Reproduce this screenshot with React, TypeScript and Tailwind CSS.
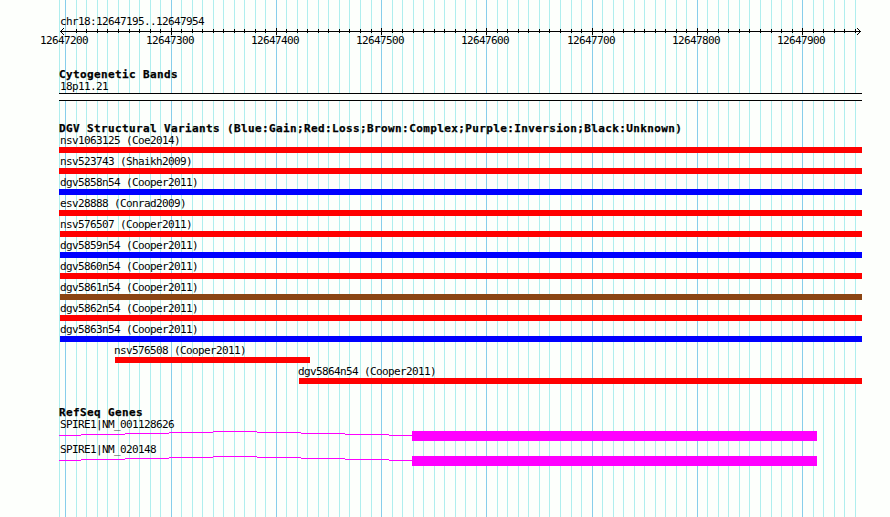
const GRID = [
  59, 65, 76, 86, 97, 107, 118, 129, 139, 150, 160, 171, 181, 192, 202, 213,
  223, 234, 244, 255, 265, 276, 286, 297, 307, 318, 328, 339, 349, 360, 371,
  381, 392, 402, 413, 423, 434, 444, 455, 465, 476, 486, 497, 507, 518, 528,
  539, 549, 560, 571, 581, 592, 602, 613, 623, 634, 644, 655, 665, 676, 686,
  697, 707, 718, 728, 739, 749, 760, 771, 781, 792, 802, 813, 823, 834, 844,
  855,
];

const MAJOR = [65, 171, 276, 381, 486, 592, 697, 802];

const LABELS = [
  "12647200",
  "12647300",
  "12647400",
  "12647500",
  "12647600",
  "12647700",
  "12647800",
  "12647900",
];

const VARIANTS = [
  { name: "nsv1063125 (Coe2014)", color: "bg-[#ff0000]", label: 60, start: 59, end: 862 },
  { name: "nsv523743 (Shaikh2009)", color: "bg-[#ff0000]", label: 60, start: 59, end: 862 },
  { name: "dgv5858n54 (Cooper2011)", color: "bg-[#0000ff]", label: 60, start: 59, end: 862 },
  { name: "esv28888 (Conrad2009)", color: "bg-[#ff0000]", label: 60, start: 59, end: 862 },
  { name: "nsv576507 (Cooper2011)", color: "bg-[#ff0000]", label: 60, start: 60, end: 862 },
  { name: "dgv5859n54 (Cooper2011)", color: "bg-[#0000ff]", label: 60, start: 60, end: 862 },
  { name: "dgv5860n54 (Cooper2011)", color: "bg-[#ff0000]", label: 60, start: 60, end: 862 },
  { name: "dgv5861n54 (Cooper2011)", color: "bg-[#8b4513]", label: 60, start: 60, end: 862 },
  { name: "dgv5862n54 (Cooper2011)", color: "bg-[#ff0000]", label: 60, start: 60, end: 862 },
  { name: "dgv5863n54 (Cooper2011)", color: "bg-[#0000ff]", label: 60, start: 60, end: 862 },
  { name: "nsv576508 (Cooper2011)", color: "bg-[#ff0000]", label: 114, start: 115, end: 310 },
  { name: "dgv5864n54 (Cooper2011)", color: "bg-[#ff0000]", label: 298, start: 299, end: 862 },
];

const GENES = ["SPIRE1|NM_001128626", "SPIRE1|NM_020148"];

const SMALL =
  "block whitespace-pre text-[11px] leading-[12px] tracking-[-0.62px]";
const HEADING =
  "block whitespace-pre pt-px pl-[59px] text-[11px] leading-[12px] font-bold tracking-[0.38px] [-webkit-text-stroke:0.25px_black]";

function GridLines() {
  return (
    <svg
      className="absolute inset-0"
      width="890"
      height="517"
      shapeRendering="crispEdges"
    >
      {GRID.map((x) => (
        <rect
          key={x}
          x={x}
          y="0"
          width="1"
          height="517"
          fill={MAJOR.includes(x) ? "#87ceeb" : "#afeeee"}
        />
      ))}
    </svg>
  );
}

function Ruler() {
  return (
    <svg
      className="block"
      width="890"
      height="7"
      shapeRendering="crispEdges"
      fill="#000"
    >
      <rect x="60" y="3" width="801" height="1" />
      {GRID.slice(2).map((x) =>
        MAJOR.includes(x) ? (
          <rect key={x} x={x} y="0" width="1" height="7" />
        ) : (
          <rect key={x} x={x} y="1" width="1" height="4" />
        )
      )}
      {[1, 2, 3].map((n) => (
        <g key={n}>
          <rect x={60 + n} y={3 - n} width="1" height="1" />
          <rect x={60 + n} y={3 + n} width="1" height="1" />
          <rect x={860 - n} y={3 - n} width="1" height="1" />
          <rect x={860 - n} y={3 + n} width="1" height="1" />
        </g>
      ))}
    </svg>
  );
}

function Variant({ name, color, label, start, end }: (typeof VARIANTS)[number]) {
  return (
    <div className="h-[21px]">
      <span className={SMALL} style={{ paddingLeft: label }}>
        {name}
      </span>
      <div
        className={`h-[6px] ${color}`}
        style={{ marginLeft: start, width: end - start }}
      />
    </div>
  );
}

function Gene({ name }: { name: string }) {
  return (
    <div className="h-[25px]">
      <span className={`${SMALL} pl-[60px]`}>{name}</span>
      <svg
        className="block"
        width="890"
        height="10"
        shapeRendering="crispEdges"
        fill="#ff00ff"
      >
        <rect x="59" y="4" width="22" height="1" />
        <rect x="81" y="3" width="44" height="1" />
        <rect x="125" y="2" width="44" height="1" />
        <rect x="169" y="1" width="44" height="1" />
        <rect x="213" y="0" width="44" height="1" />
        <rect x="257" y="1" width="44" height="1" />
        <rect x="301" y="2" width="44" height="1" />
        <rect x="345" y="3" width="44" height="1" />
        <rect x="389" y="4" width="23" height="1" />
        <rect x="412" y="0" width="405" height="10" />
      </svg>
    </div>
  );
}

export default function App() {
  return (
    <div className="relative h-[517px] w-[890px] overflow-hidden bg-[#fdfffc] font-['DejaVu_Sans_Mono',monospace] text-black">
      <GridLines />
      <main className="relative flex flex-col">
        <header className="h-[68px] pt-[16px]">
          <span className={`${SMALL} pl-[60px]`}>chr18:12647195..12647954</span>
          <Ruler />
          <div className="flex pl-[40px]">
            {LABELS.map((label, i) => (
              <span
                key={label}
                className={SMALL}
                style={{ width: (MAJOR[i + 1] ?? 907) - MAJOR[i] }}
              >
                {label}
              </span>
            ))}
          </div>
        </header>

        <section className="h-[54px]">
          <h2 className={HEADING}>Cytogenetic Bands</h2>
          <span className={`${SMALL} pl-[60px]`}>18p11.21</span>
          <div className="ml-[59px] h-[8px] w-[803px] border-y border-black bg-[#fdfffc]" />
        </section>

        <section className="h-[284px]">
          <h2 className={HEADING}>
            DGV Structural Variants
            (Blue:Gain;Red:Loss;Brown:Complex;Purple:Inversion;Black:Unknown)
          </h2>
          {VARIANTS.map((variant) => (
            <Variant key={variant.name} {...variant} />
          ))}
        </section>

        <section>
          <h2 className={HEADING}>RefSeq Genes</h2>
          {GENES.map((gene) => (
            <Gene key={gene} name={gene} />
          ))}
        </section>
      </main>
    </div>
  );
}
